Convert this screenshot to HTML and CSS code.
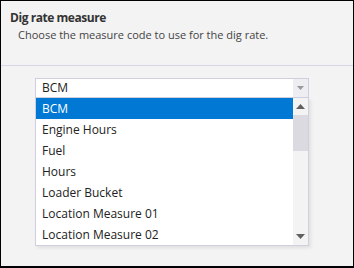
FILE: index.html
```html
<!DOCTYPE html>
<html>
<head>
<meta charset="utf-8">
<link rel="stylesheet" href="styles.css">
</head>
<body>
<div class="frame">
  <div class="header">
    <div class="title">Dig rate measure</div>
    <div class="desc">Choose the measure code to use for the dig rate.</div>
  </div>
  <div class="content">
    <div class="picker">
      <div class="combo">
        <span class="combo-text">BCM</span>
        <span class="combo-btn"><svg width="7" height="4" viewBox="0 0 7 4"><path d="M0 0H7L3.5 4Z" fill="#9a9a9a"/></svg></span>
      </div>
      <div class="list">
        <div class="items">
          <div class="item selected">BCM</div>
          <div class="item">Engine Hours</div>
          <div class="item">Fuel</div>
          <div class="item">Hours</div>
          <div class="item">Loader Bucket</div>
          <div class="item">Location Measure 01</div>
          <div class="item">Location Measure 02</div>
        </div>
        <div class="scrollbar">
          <span class="arrow up"><svg width="9" height="5" viewBox="0 0 9 5"><path d="M0 5H9L4.5 0Z" fill="#606060"/></svg></span>
          <span class="track"><span class="thumb"></span></span>
          <span class="arrow down"><svg width="9" height="5" viewBox="0 0 9 5"><path d="M0 0H9L4.5 5Z" fill="#606060"/></svg></span>
        </div>
      </div>
    </div>
  </div>
</div>
</body>
</html>
```
FILE: styles.css
```css
html, body {
  margin: 0;
  padding: 0;
}
body {
  font-family: "Open Sans", "Noto Sans", sans-serif;
  font-size: 12px;
  color: #222;
}
.frame {
  width: 354px;
  height: 268px;
  box-sizing: border-box;
  border: 1px solid #000;
  border-bottom-width: 2px;
  background: #f3f3f3;
  display: flex;
  flex-direction: column;
}
.header {
  height: 65px;
  box-sizing: border-box;
  border-bottom: 1px solid #d6d6e4;
  padding: 9px 0 0 9px;
}
.title {
  font-weight: 700;
  font-size: 12px;
  color: #333;
  line-height: 16px;
  letter-spacing: -0.45px;
}
.desc {
  margin-left: 8px;
  color: #444;
  font-size: 11px;
  line-height: 16px;
  margin-top: 1px;
}
.content {
  padding: 12px 0 0 34px;
}
.picker {
  width: 274px;
}
.combo {
  height: 20px;
  box-sizing: border-box;
  border: 1px solid #cfcfdf;
  background: #fff;
  display: flex;
  align-items: center;
}
.combo-text {
  flex: 1;
  padding-left: 6px;
  line-height: 18px;
}
.combo-btn {
  width: 15px;
  height: 18px;
  background: #ededf2;
  display: flex;
  align-items: center;
  justify-content: center;
}
.list {
  height: 148px;
  box-sizing: border-box;
  border: 1px solid #cfcfdf;
  border-top: 0;
  background: #fff;
  display: flex;
  box-shadow: 2px 2px 3px rgba(0,0,0,0.08);
}
.items {
  flex: 1;
}
.item {
  height: 21px;
  line-height: 21px;
  padding-left: 6px;
  color: #222;
}
.item.selected {
  background: #0078d4;
  color: #fff;
}
.scrollbar {
  width: 15px;
  background: #f3f3f3;
  display: flex;
  flex-direction: column;
}
.arrow {
  height: 17px;
  display: flex;
  align-items: center;
  justify-content: center;
}
.track {
  flex: 1;
}
.thumb {
  display: block;
  height: 36px;
  background: #dadae0;
}
```
